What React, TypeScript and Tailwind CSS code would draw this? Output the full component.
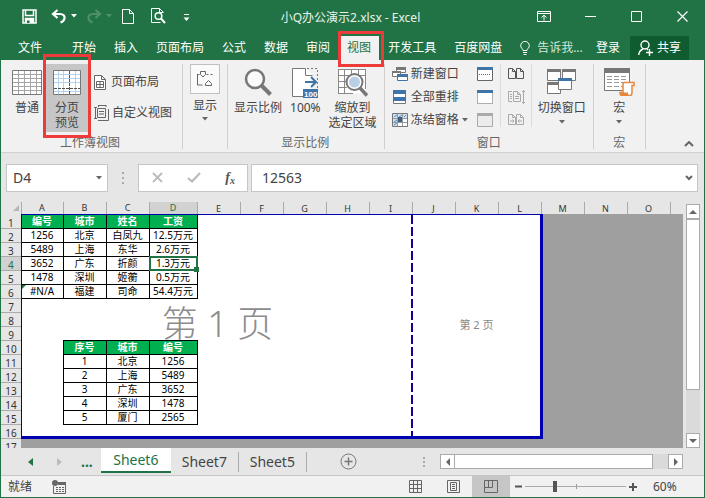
import React, { useState } from "react";

const menuTabs = ["开始", "插入", "页面布局", "公式", "数据", "审阅", "视图", "开发工具", "百度网盘"];
const columns = ["A", "B", "C", "D", "E", "F", "G", "H", "I", "J", "K", "L", "M", "N", "O"];
const sheets = ["Sheet6", "Sheet7", "Sheet5"];

const cells: Record<number, string[]> = {
  1: ["编号", "城市", "姓名", "工资"],
  2: ["1256", "北京", "白凤九", "12.5万元"],
  3: ["5489", "上海", "东华", "2.6万元"],
  4: ["3652", "广东", "折颜", "1.3万元"],
  5: ["1478", "深圳", "姬蘅", "0.5万元"],
  6: ["#N/A", "福建", "司命", "54.4万元"],
  10: ["", "序号", "城市", "编号"],
  11: ["", "1", "北京", "1256"],
  12: ["", "2", "上海", "5489"],
  13: ["", "3", "广东", "3652"],
  14: ["", "4", "深圳", "1478"],
  15: ["", "5", "厦门", "2565"],
};

function Caret({ className = "text-[#666]" }: { className?: string }) {
  return (
    <svg width="6" height="4" viewBox="0 0 6 4" className={className}>
      <path d="M0 0h6L3 3.5z" fill="currentColor" />
    </svg>
  );
}

function RedFrame({ className }: { className: string }) {
  return <span className={`absolute z-20 border-[3px] border-[#ee3a39] pointer-events-none ${className}`}></span>;
}

function TitleBar() {
  return (
    <div className="grid grid-cols-[1fr_auto_1fr] items-center h-9 shrink-0">
      <div className="flex items-center pl-[22px] pb-1">
        <button aria-label="保存">
          <svg width="15" height="15" viewBox="0 0 15 15" fill="none" stroke="#fff" strokeWidth="1.5">
            <path d="M1 1h13v13H1z" />
            <path d="M3.5 1v5.5h8V1" />
            <path d="M3.5 14v-4.5h8V14" fill="#fff" />
            <path d="M5 11.5h2.5V14H5z" fill="#217346" stroke="none" />
          </svg>
        </button>
        <button aria-label="撤消" className="flex items-center gap-1 ml-[14px]">
          <svg width="16" height="15" viewBox="0 0 16 15" fill="none" stroke="#fff" strokeWidth="2.2">
            <path d="M6.5 1L2 5l4.500 4" />
            <path d="M2.500 5h6.500c3.300 0 5 2 4.500 4.500-.4 1.900-2 3.300-4 4" />
          </svg>
          <Caret className="text-white" />
        </button>
        <button aria-label="恢复" className="flex items-center gap-1 ml-[9px] text-[#4d9069]">
          <svg width="16" height="15" viewBox="0 0 16 15" fill="none" stroke="currentColor" strokeWidth="2.200">
            <path d="M9.500 1L14 5l-4.500 4" />
            <path d="M13.500 5H7c-3.300 0-5 2-4.500 4.500.4 1.900 2 3.300 4 4" />
          </svg>
          <Caret className="text-[#4d9069]" />
        </button>
        <button aria-label="新建" className="ml-[10px]">
          <svg width="12" height="15" viewBox="0 0 12 15" fill="none" stroke="#fff">
            <path d="M.5.5h7l4 4v10H.5zM7.500.5v4h4" />
          </svg>
        </button>
        <button aria-label="打印预览" className="ml-[17px]">
          <svg width="15" height="16" viewBox="0 0 15 16" fill="none" stroke="#fff">
            <path d="M9.500 14.500H.5V.5h8l4 4M8.500.5v4h4" />
            <circle cx="7.500" cy="8" r="3.300" strokeWidth="1.500" />
            <path d="M10 10.500l4 4.500" strokeWidth="2" />
          </svg>
        </button>
        <button aria-label="自定义快速访问工具栏" className="ml-[17px] mt-1">
          <svg width="7" height="8" viewBox="0 0 7 8" fill="#fff">
            <path d="M1 0h5v1H1zM.5 3.500h6l-3 3.500z" />
          </svg>
        </button>
      </div>
      <h1 className="pr-1 text-xs text-[#e8f3ec]">小Q办公演示2.xlsx - Excel</h1>
      <div className="flex items-center justify-end pb-1 pr-[17px]">
        <button aria-label="功能区显示选项" className="mr-[34px]">
          <svg width="14" height="11" viewBox="0 0 14 11" fill="none" stroke="#fff">
            <path d="M.5.5h13v10H.5zM.5 2.500h13M7 9.500V4.500M4.500 6.500L7 4.200l2.500 2.300" />
          </svg>
        </button>
        <button aria-label="最小化" className="mr-[35px]">
          <svg width="11" height="11" viewBox="0 0 11 11" stroke="#fff">
            <path d="M0 5.500h11" />
          </svg>
        </button>
        <button aria-label="最大化" className="mr-[35px]">
          <svg width="11" height="11" viewBox="0 0 11 11" fill="none" stroke="#fff">
            <path d="M.5.5h10v10H.5z" />
          </svg>
        </button>
        <button aria-label="关闭">
          <svg width="11" height="11" viewBox="0 0 11 11" stroke="#fff" strokeWidth="1.200">
            <path d="M.5.5l10 10M10.500.5l-10 10" />
          </svg>
        </button>
      </div>
    </div>
  );
}

function MenuBar() {
  return (
    <div className="flex h-6 shrink-0 text-white text-xs">
      <button className="pl-[18px] pr-[21px] shrink-0">文件</button>
      {menuTabs.map((tab) => (
        <button
          key={tab}
          className={tab === "视图" ? "relative px-2 bg-[#f1f1f1] text-[#217346] shrink-0" : "px-[9px] shrink-0"}
        >
          {tab}
          {tab === "视图" && <RedFrame className="-left-[1px] -right-[5px] -top-[5px] -bottom-[7px]" />}
        </button>
      ))}
      <button className="flex items-center gap-[7px] ml-[9px] shrink-0 text-[#d3e8da]">
        <svg width="10" height="14" viewBox="0 0 10 14" fill="none" stroke="#fff">
          <path d="M3 9.500C3 7.800.7 7 .7 4.700a4.300 4.300 0 018.600 0C9.300 7 7 7.800 7 9.500zM3 11.500h4M3.500 13.500h3" />
        </svg>
        告诉我...
      </button>
      <button className="ml-auto px-[10px] shrink-0">登录</button>
      <button className="flex items-center gap-1 bg-[#0e5c2f] px-2 mr-4 shrink-0">
        <svg width="15" height="16" viewBox="0 0 15 16" fill="none" stroke="#fff" strokeWidth="1.400">
          <circle cx="7" cy="5" r="4" />
          <path d="M.7 15c.3-3 2-5 4.300-6M9 9l1 1M8 12.500h7M11.500 9v7" />
        </svg>
        共享
      </button>
    </div>
  );
}

function Group({ label, className = "", children }: { label: string; className?: string; children: React.ReactNode }) {
  return (
    <section className={`flex flex-col justify-between shrink-0 my-1 h-[85px] border-r border-[#d0d0d0] ${className}`}>
      <div className="flex items-start">{children}</div>
      <div className="text-center text-[#666] leading-4 h-4 mb-[-2px]">{label}</div>
    </section>
  );
}

function BigButton({ icon, lines, caret, className = "" }: { icon: React.ReactNode; lines: string[]; caret?: boolean; className?: string }) {
  return (
    <button className={`relative flex flex-col items-center pt-[5px] leading-[15px] ${className}`}>
      <span className="flex items-center justify-center h-[26px] mb-[5px]">{icon}</span>
      {lines.map((line) => (
        <span key={line}>{line}</span>
      ))}
      {caret && <span className="mt-[5px]"><Caret /></span>}
    </button>
  );
}

function NormalIcon() {
  return (
    <svg width="30" height="25" viewBox="0 0 30 25" fill="none">
      <path d="M.5.5h29v24H.5z" fill="#fff" stroke="#777" />
      <path d="M1 4.500h28M1 8.500h28M1 12.500h28M1 16.500h28M1 20.500h28M6.500 1v23M12.500 1v23M18.500 1v23M24.500 1v23" stroke="#a5a5a5" />
    </svg>
  );
}

function PageBreakIcon() {
  return (
    <svg width="28" height="25" viewBox="0 0 28 25" fill="none">
      <path d="M.5.5h27v24H.5z" fill="#fff" stroke="#777" />
      <path d="M1 4.500h26M1 8.500h26M1 12.500h26M1 21.500h26M5.500 1v23M10.500 1v23M22.500 1v23" stroke="#b4d2ee" />
      <path d="M16.500 1v24M1 18.500h26" stroke="#555" strokeDasharray="3 1" />
    </svg>
  );
}

function SmallWindow({ kind }: { kind: "split" | "hide" | "unhide" }) {
  return (
    <svg width="16" height="14" viewBox="0 0 16 14" fill="none">
      <path
        d="M.5.5h15v13H.5z"
        fill={kind === "unhide" ? "#ececec" : "#fff"}
        stroke={kind === "unhide" ? "#aaa" : "#666"}
        strokeDasharray={kind === "hide" ? "1 1" : undefined}
      />
      <path d="M0 0h16v3H0z" fill={kind === "unhide" ? "#aaa" : "#3f74a9"} />
      {kind === "split" && <path d="M2 7.500h12" stroke="#3f74a9" strokeDasharray="1 1" />}
    </svg>
  );
}

function PagesIcon({ kind }: { kind: "side" | "scroll" | "reset" }) {
  return (
    <svg width="17" height="14" viewBox="0 0 17 14" fill="none" stroke={kind === "side" ? "#555" : "#aaa"}>
      {kind === "scroll" ? (
        <path d="M4 1.500H.5v10H4M2 4.500h2M2 6.500h2M2 8.500h2M5.500 1.500h4l3 3v7h-7zM9.500 1.500v3h3M7 6.500h4M7 8.500h4M15.500 0v14M14 2l1.500-1.500L17 2M14 12l1.500 1.500L17 12" />
      ) : (
        <path d="M.5 1.500h4l3 3v7h-7zM4.500 1.500v3h3M8.500 1.500h4l3 3v7h-7zM12.500 1.500v3h3" />
      )}
      {kind === "reset" && <path d="M2 8h4M4.500 6.500L6 8 4.500 9.500M14 8h-4M11.500 6.500L10 8l1.500 1.500" />}
    </svg>
  );
}

function Ribbon() {
  return (
    <div className="flex h-[93px] shrink-0 bg-[#f1f1f1] border-b border-[#d0d0d0] text-xs text-[#444]">
      <Group label="工作簿视图" className="pl-[7px] pr-[10px]">
        <BigButton icon={<NormalIcon />} lines={["普通"]} className="w-[38px]" />
        <div className="relative">
          <BigButton icon={<PageBreakIcon />} lines={["分页", "预览"]} className="w-[42px] h-[68px] bg-[#c6c6c6]" />
          <RedFrame className="-inset-x-[3px] -top-[10px] -bottom-[6px]" />
        </div>
        <div className="flex flex-col pl-[6px] pt-[10px] gap-[15px]">
          <button className="flex items-center gap-[5px] leading-4">
            <svg width="12" height="15" viewBox="0 0 12 15" fill="none" stroke="#666">
              <path d="M.5.5h7l4 4v10H.5zM7.500.5v4h4" fill="#fff" />
              <path d="M2.500 6.500h7v6h-7zM6 6.500v6M2.500 9.500h7" />
            </svg>
            页面布局
          </button>
          <button className="flex items-center gap-[3px] leading-4">
            <svg width="15" height="16" viewBox="0 0 15 16" fill="none" stroke="#666">
              <path d="M3.500 3.500h8v9h-8zM5 6.500h5M5 9h5M1.500 3v10M0 2.500h3M0 13.500h3M4 .5h8M4.500 0v2M12 0v2M4 15.500h10.500V4" />
            </svg>
            自定义视图
          </button>
        </div>
      </Group>

      <div className="shrink-0 my-1 h-[85px] px-[6px] border-r border-[#d0d0d0]">
        <button className="flex flex-col items-center leading-[15px]">
          <span className="flex items-center justify-center size-[30px] mx-[1px] mb-1 bg-[#fafafa] border border-[#c0c0c0]">
            <svg width="18" height="18" viewBox="0 0 18 18" fill="none" stroke="#666">
              <path d="M4.500 1.500h5v3L7 7 4.500 4.500zM1.500 4v11h5M1.500 4.500h2M10.500 4.500h2M14.500 4.500h2" />
              <path d="M9.500 15.500v-2l3-3 3 3v2z" />
            </svg>
          </span>
          显示
          <span className="mt-1"><Caret /></span>
        </button>
      </div>

      <Group label="显示比例" className="pl-[6px] pr-[7px]">
        <BigButton
          lines={["显示比例"]}
          icon={
            <svg width="28" height="28" viewBox="0 0 28 28" fill="none" stroke="#777">
              <circle cx="11" cy="11" r="9" strokeWidth="2.500" fill="#fafafa" />
              <path d="M17.500 17.500l9 9" strokeWidth="4" />
            </svg>
          }
        />
        <BigButton
          lines={["100%"]}
          className="ml-2"
          icon={
            <svg width="28" height="31" viewBox="0 0 28 31" fill="none">
              <path d="M1.500 1.500h13l6 5v23h-19z" fill="#fff" />
              <path d="M12.500 29.500h-11v-28h13v7h7" stroke="#777" />
              <path d="M16 1.500h10.500v21" stroke="#777" strokeDasharray="2 2" />
              <path d="M14 15h10M20 10l5 5-5 5" stroke="#3f74a9" strokeWidth="2" />
              <path d="M12 22h15v9H12z" fill="#3f74a9" />
              <text x="13" y="29.500" fontSize="8" fontWeight="bold" fill="#fff" fontFamily="Liberation Sans">100</text>
            </svg>
          }
        />
        <BigButton
          lines={["缩放到", "选定区域"]}
          className="ml-2"
          icon={
            <svg width="31" height="29" viewBox="0 0 31 29" fill="none">
              <path d="M1.500 1.500h27v24h-27z" fill="#fff" />
              <path d="M1.500 1v25M7.500 1v25M14.500 1v8M21.500 1v8M28.500 1v20M1 1.500h28M1 7.500h28M1 13.500h9M1 19.500h9M1 25.500h15" stroke="#888" />
              <circle cx="17.500" cy="14" r="8" fill="#fff" stroke="#777" strokeWidth="2" />
              <circle cx="17.500" cy="14" r="5.500" fill="#b9cfe6" />
              <path d="M23 20l7 7.500" stroke="#777" strokeWidth="3.500" />
            </svg>
          }
        />
      </Group>

      <Group label="窗口" className="pl-[7px] pr-[7px]">
        <div className="flex flex-col gap-[7px] pt-[2px]">
          <button className="flex items-center gap-[3px] leading-4">
            <svg width="16" height="16" viewBox="0 0 16 16" fill="#fff">
              <path d="M4.500 1.500h9v5h-9zM.5 5.500h8v5h-8z" stroke="#777" />
              <path d="M4 1h10v3H4zM0 5h9v2H0z" fill="#777" />
              <path d="M5.500 8.500h10v6h-10z" stroke="#3f74a9" />
              <path d="M5 8h11v3H5z" fill="#3f74a9" />
            </svg>
            新建窗口
          </button>
          <button className="flex items-center gap-[3px] leading-4">
            <svg width="16" height="16" viewBox="0 0 16 16" fill="#fff">
              <path d="M1.500 1.500h12v13h-12z" stroke="#777" />
              <path d="M1 1h13v4H1zM1 8h13v4H1z" fill="#3f74a9" />
            </svg>
            全部重排
          </button>
          <button className="flex items-center gap-[3px] leading-4">
            <svg width="16" height="16" viewBox="0 0 16 16" fill="none">
              <path d="M.5 1.500h15v13H.5z" fill="#fff" stroke="#777" />
              <path d="M1 2h14v4H1zM1 6h5v8H1z" fill="#cfe0f0" />
              <path d="M1 6.500h14M1 10.500h14M5.500 2v12M10.500 2v12" stroke="#9a9a9a" />
              <path d="M2 5l3-2M7 5l3-2M12 5l2-2M2 10l3-2M2 13l3-2" stroke="#5d8fbf" />
              <path d="M6 5h4v5H6z" fill="#3f5f80" />
            </svg>
            冻结窗格
            <Caret />
          </button>
        </div>
        <div className="flex flex-col gap-[9px] pt-[3px] pl-[9px] pr-[7px] mr-[7px] border-r border-[#dcdcdc]">
          <button aria-label="拆分"><SmallWindow kind="split" /></button>
          <button aria-label="隐藏"><SmallWindow kind="hide" /></button>
          <button aria-label="取消隐藏"><SmallWindow kind="unhide" /></button>
        </div>
        <div className="flex flex-col gap-[9px] pt-[3px] pr-[6px] mr-[6px] border-r border-[#dcdcdc]">
          <button aria-label="并排查看"><PagesIcon kind="side" /></button>
          <button aria-label="同步滚动"><PagesIcon kind="scroll" /></button>
          <button aria-label="重设窗口位置"><PagesIcon kind="reset" /></button>
        </div>
        <BigButton
          lines={["切换窗口"]}
          caret
          icon={
            <svg width="30" height="26" viewBox="0 0 30 26" fill="#fff">
              <path d="M.5.5h13v11H.5zM15.500.5h13v11h-13zM.5 13.500h13v11H.5z" stroke="#777" />
              <path d="M0 0h14v3H0zM15 0h14v3H15zM0 13h14v3H0z" fill="#777" />
              <path d="M11.500 9.500h13v11h-13z" stroke="#777" />
              <path d="M11 9h14v3H11z" fill="#3f74a9" />
            </svg>
          }
        />
      </Group>

      <Group label="宏" className="px-[10px]">
        <BigButton
          lines={["宏"]}
          caret
          icon={
            <svg width="31" height="28" viewBox="0 0 31 28" fill="none">
              <path d="M.5.5h25v22H.5z" fill="#fff" stroke="#777" />
              <path d="M0 0h26v5H0z" fill="#777" />
              <path d="M3 8.500h20M3 11.500h20M3 14.500h20M3 18.500h20" stroke="#999" strokeDasharray="5 2" />
              <path d="M20 14.500h10v3h-2v7c0 2-1 3-2 3h-8c-1 0-2-1-2-3h3v-7c0-2 .5-3 1-3z" fill="#fff" stroke="#e8873a" strokeWidth="1.500" />
              <path d="M16 24.500h8c0 2 .5 3 2 3h-8c-1 0-2-1-2-3z" fill="#e8873a" />
            </svg>
          }
        />
      </Group>

      <button aria-label="折叠功能区" className="ml-auto self-end mb-[5px] mr-[10px]">
        <svg width="10" height="6" viewBox="0 0 10 6" fill="none" stroke="#666" strokeWidth="2">
          <path d="M1 5l4-4 4 4" />
        </svg>
      </button>
    </div>
  );
}

function FormulaBar() {
  const [formula, setFormula] = useState("12563");

  return (
    <div className="flex items-center h-[49px] shrink-0 pl-[5px] pr-[6px] text-sm text-[#444]">
      <div className="flex items-center w-[102px] h-7 bg-white border border-[#c6c6c6]">
        <input aria-label="名称框" defaultValue="D4" className="flex-1 min-w-0 pl-[6px] outline-none" />
        <button aria-label="名称列表" className="px-[5px]"><Caret /></button>
      </div>
      <svg width="2" height="12" viewBox="0 0 2 12" fill="#aaa" className="mx-[14px]">
        <path d="M0 0h2v2H0zM0 5h2v2H0zM0 10h2v2H0z" />
      </svg>
      <div className="flex items-center justify-between w-[110px] h-7 pl-[13px] pr-3 bg-white border border-[#c6c6c6]">
        <button aria-label="取消">
          <svg width="11" height="11" viewBox="0 0 11 11" stroke="#bbb" strokeWidth="1.800">
            <path d="M1 1l9 9M10 1l-9 9" />
          </svg>
        </button>
        <button aria-label="输入">
          <svg width="14" height="11" viewBox="0 0 14 11" fill="none" stroke="#bbb" strokeWidth="2.200">
            <path d="M1 6l4 3.500L13 1" />
          </svg>
        </button>
        <button aria-label="插入函数" className="font-['Liberation_Serif'] italic font-bold text-[#555]">
          f<sub className="text-[10px]">x</sub>
        </button>
      </div>
      <div className="flex flex-1 items-center h-7 ml-[3px] bg-white border border-[#c6c6c6]">
        <input
          aria-label="编辑栏"
          value={formula}
          onChange={(e) => setFormula(e.target.value)}
          className="flex-1 min-w-0 pl-[10px] outline-none"
        />
        <button aria-label="展开编辑栏" className="px-1">
          <svg width="8" height="6" viewBox="0 0 8 6" fill="none" stroke="#666" strokeWidth="2">
            <path d="M1 1l3 3 3-3" />
          </svg>
        </button>
      </div>
    </div>
  );
}

function Cell({ row, col }: { row: number; col: number }) {
  const text = cells[row]?.[col] ?? "";
  // everything past column L or row 16 lies outside the print area
  if (col > 11 || row > 16) return <td className="p-0"></td>;
  if (!text) return <td className="p-0 bg-white"></td>;

  const header = row === 1 || row === 10;
  return (
    <td
      className={
        header
          ? "relative p-0 border border-black bg-[#00b050] text-white font-bold text-center"
          : "relative p-0 border border-black bg-white text-black text-center"
      }
    >
      {text}
      {row === 4 && col === 3 && (
        <span className="absolute z-10 -inset-[1px] border-2 border-[#217346]">
          <span className="absolute -right-[3px] -bottom-[3px] size-[5px] bg-[#217346]"></span>
        </span>
      )}
      {text === "#N/A" && (
        <svg width="4" height="4" viewBox="0 0 4 4" className="absolute left-0 top-0">
          <path d="M0 0h4L0 4z" fill="#217346" />
        </svg>
      )}
    </td>
  );
}

function Sheet() {
  const rows = Array.from({ length: 17 }, (_, i) => i + 1);

  return (
    <div className="flex flex-1 min-h-0">
      <div className="relative flex-1 overflow-hidden bg-[#9f9f9f]">
        <table className="table-fixed border-collapse w-full text-[10px] leading-[13px]">
          <colgroup>
            <col className="w-5" />
            {columns.map((c) => (
              <col key={c} className={c === "D" ? "w-12" : c === "A" ? "w-[42px]" : "w-[43px]"} />
            ))}
            <col />
          </colgroup>
          <thead>
            <tr className="h-3 bg-[#e6e6e6] text-[9px] leading-[11px] text-[#333]">
              <th className="p-0 border-r border-[#ababab]">
                <svg width="6" height="6" viewBox="0 0 6 6" className="ml-auto mr-[2px]">
                  <path d="M6 0v6H0z" fill="#b5b5b5" />
                </svg>
              </th>
              {columns.map((c) => (
                <th
                  key={c}
                  className={
                    c === "D"
                      ? "p-0 font-normal bg-[#d2d2d2] text-[#217346] border-r border-[#ababab]"
                      : "p-0 font-normal border-r border-[#ababab]"
                  }
                >
                  {c}
                </th>
              ))}
              <th></th>
            </tr>
          </thead>
          <tbody>
            {rows.map((row) => (
              <tr key={row} className="h-[14px]">
                <th
                  className={
                    row === 4
                      ? "p-0 font-normal align-bottom bg-[#d2d2d2] text-[#217346] border-b border-[#ababab] leading-[10px]"
                      : "p-0 font-normal align-bottom bg-[#e6e6e6] text-[#333] border-b border-[#ababab] leading-[10px]"
                  }
                >
                  {row}
                </th>
                {columns.map((c, col) => (
                  <Cell key={c} row={row} col={col} />
                ))}
                <td></td>
              </tr>
            ))}
          </tbody>
        </table>

        {/* print area outline, page break and page names */}
        <div className="absolute left-5 top-3 w-[522px] h-[225px] border-t border-l border-r-[3px] border-b-[3px] border-[#0000b0] pointer-events-none">
          <div className="absolute left-[389px] inset-y-0 w-[2px] bg-[repeating-linear-gradient(to_bottom,#1a0090_0_9px,transparent_9px_12px)]"></div>
          <div className="absolute left-0 top-[84px] w-[391px] text-center text-4xl leading-[50px] font-light text-[#8c8c8c]">第 1 页</div>
          <div className="absolute left-[391px] right-0 top-[102px] text-center text-[11px] leading-4 text-[#888]">第 2 页</div>
        </div>
      </div>

      <div className="flex flex-col w-[21px] pl-[3px] pr-1 bg-[#e6e6e6]">
        <button aria-label="向上滚动" className="flex items-center justify-center h-[15px] mt-[2px] bg-white border border-[#ababab]">
          <svg width="8" height="4" viewBox="0 0 8 4"><path d="M0 4h8L4 0z" fill="#666" /></svg>
        </button>
        <div className="flex-1 bg-[#dadada]">
          <div className="h-4/5 bg-white border border-[#ababab]"></div>
        </div>
        <button aria-label="向下滚动" className="flex items-center justify-center h-[15px] bg-white border border-[#ababab]">
          <svg width="8" height="4" viewBox="0 0 8 4"><path d="M0 0h8L4 4z" fill="#666" /></svg>
        </button>
      </div>
    </div>
  );
}

function SheetTabs() {
  const [active, setActive] = useState("Sheet6");

  return (
    <div className="flex items-center h-7 shrink-0 pr-[21px] border-b border-[#c6c6c6] text-sm text-[#444]">
      <button aria-label="上一张" className="ml-[27px]">
        <svg width="5" height="8" viewBox="0 0 5 8"><path d="M5 0v8L0 4z" fill="#217346" /></svg>
      </button>
      <button aria-label="下一张" className="ml-6">
        <svg width="5" height="8" viewBox="0 0 5 8"><path d="M0 0v8l5-4z" fill="#bbb" /></svg>
      </button>
      <button className="ml-[19px] mr-2 font-bold text-[#217346]">...</button>
      {sheets.map((name) => (
        <button
          key={name}
          onClick={() => setActive(name)}
          className={
            name === active
              ? "self-start h-[25px] w-[70px] bg-white border-b-2 border-[#217346] text-[#217346] leading-[22px]"
              : "h-5 w-[68px] border-r border-[#ababab] leading-4"
          }
        >
          {name}
        </button>
      ))}
      <button aria-label="新工作表" className="ml-[33px]">
        <svg width="17" height="17" viewBox="0 0 17 17" fill="none" stroke="#777">
          <circle cx="8.500" cy="8.500" r="7.500" />
          <path d="M4.500 8.500h8M8.500 4.500v8" strokeWidth="1.500" />
        </svg>
      </button>
      <svg width="2" height="10" viewBox="0 0 2 10" fill="#aaa" className="ml-auto mr-[15px]">
        <path d="M0 0h2v2H0zM0 4h2v2H0zM0 8h2v2H0z" />
      </svg>
      <div className="flex w-[243px] h-[15px] bg-[#dadada]">
        <button aria-label="向左滚动" className="flex items-center justify-center w-[15px] bg-white border border-[#ababab]">
          <svg width="4" height="8" viewBox="0 0 4 8"><path d="M4 0v8L0 4z" fill="#666" /></svg>
        </button>
        <div className="flex-1 mr-[15px] bg-white border border-l-0 border-[#ababab]"></div>
        <button aria-label="向右滚动" className="flex items-center justify-center w-[15px] bg-white border border-[#ababab]">
          <svg width="4" height="8" viewBox="0 0 4 8"><path d="M0 0v8l4-4z" fill="#666" /></svg>
        </button>
      </div>
    </div>
  );
}

function StatusBar() {
  const [zoom, setZoom] = useState(60);

  return (
    <div className="flex items-center h-[21px] shrink-0 pl-[7px] bg-[#f1f1f1] text-xs text-[#444]">
      <span>就绪</span>
      <button aria-label="录制宏" className="ml-5">
        <svg width="14" height="14" viewBox="0 0 14 14" fill="none">
          <path d="M4 2.500h9.500v11h-12V6" stroke="#666" />
          <path d="M6 2h8v3H6z" fill="#666" />
          <circle cx="3" cy="3" r="3" fill="#666" />
          <path d="M4 7.500h8M4 9.500h8M4 11.500h8" stroke="#666" strokeDasharray="2 1" />
        </svg>
      </button>
      <div className="flex self-stretch ml-auto text-[#666]">
        <button aria-label="普通视图" className="flex items-center justify-center w-[38px]">
          <svg width="13" height="13" viewBox="0 0 13 13" fill="none" stroke="currentColor">
            <path d="M.5.5h12v12H.5zM.5 4.500h12M.5 8.500h12M4.500.5v12M8.500.5v12" />
          </svg>
        </button>
        <button aria-label="页面布局视图" className="flex items-center justify-center w-[38px]">
          <svg width="13" height="13" viewBox="0 0 13 13" fill="none" stroke="currentColor">
            <path d="M.5.5h12v12H.5zM3.500 2.500h6v8h-6zM5 4.500h3M5 6.500h3M5 8.500h3" />
          </svg>
        </button>
        <button aria-label="分页预览视图" className="flex items-center justify-center w-[38px] bg-[#c6c6c6]">
          <svg width="14" height="13" viewBox="0 0 14 13" fill="none" stroke="currentColor">
            <path d="M.5.5h13v12H.5zM4.500.5v7M8.500.5v7M.5 7.500h8" />
          </svg>
        </button>
      </div>
      <button aria-label="缩小" className="ml-[5px]">
        <svg width="7" height="7" viewBox="0 0 7 7"><path d="M0 2.500h7v2H0z" fill="#555" /></svg>
      </button>
      <div className="relative flex items-center w-[101px] mx-[3px]">
        <span className="absolute left-1/2 h-[5px] w-px bg-[#999]"></span>
        <input
          type="range"
          aria-label="显示比例"
          min={2}
          max={200}
          value={zoom}
          onChange={(e) => setZoom(Number(e.target.value))}
          className="relative w-full h-px appearance-none bg-[#aaa] [&::-webkit-slider-thumb]:appearance-none [&::-webkit-slider-thumb]:w-1 [&::-webkit-slider-thumb]:h-[11px] [&::-webkit-slider-thumb]:bg-[#555]"
        />
      </div>
      <button aria-label="放大">
        <svg width="8" height="8" viewBox="0 0 8 8"><path d="M0 3h8v2H0zM3 0h2v8H3z" fill="#555" /></svg>
      </button>
      <span className="w-[67px] pl-4">{zoom}%</span>
    </div>
  );
}

function App() {
  return (
    <div className="flex flex-col h-screen overflow-hidden bg-[#217346] font-['Noto_Sans','Noto_Sans_CJK_SC',sans-serif]">
      <TitleBar />
      <MenuBar />
      <div className="flex flex-col flex-1 min-h-0 mx-px mb-px bg-[#e6e6e6]">
        <Ribbon />
        <FormulaBar />
        <Sheet />
        <SheetTabs />
        <StatusBar />
      </div>
    </div>
  );
}

export default App;
